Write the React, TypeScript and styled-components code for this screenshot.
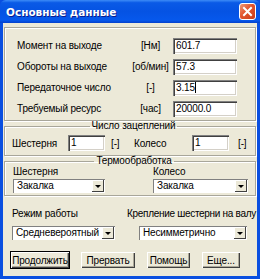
import React from "react";
import styled, { createGlobalStyle } from "styled-components";

const Global = createGlobalStyle`
  html, body { margin: 0; padding: 0; background: #ffffff; }
  * { box-sizing: border-box; }
`;

const Window = styled.div`
  width: 260px;
  height: 279px;
  overflow: hidden;
  display: flex;
  flex-direction: column;
  background: #0a4fe0;
  padding: 0 3px 3px 3px;
  font-family: "Liberation Sans", Arial, sans-serif;
  font-size: 10px;
  letter-spacing: -0.15px;
  color: #000;
`;

const TitleBar = styled.div`
  height: 23px;
  margin: 0 -3px;
  padding: 0 4px 0 6px;
  display: flex;
  align-items: center;
  justify-content: space-between;
  background: linear-gradient(to bottom, #3d8cf7 0%, #0a5ae6 12%, #0553e3 50%, #0658ec 88%, #0440cc 100%);
  border-radius: 6px 6px 0 0;
`;

const Title = styled.span`
  color: #fff;
  font-family: "DejaVu Sans", sans-serif;
  font-weight: bold;
  font-size: 10.5px;
  letter-spacing: 0;
  text-shadow: 1px 1px 0 #0a1c8c;
`;

const CloseBtn = styled.div`
  width: 17px;
  height: 17px;
  border: 1px solid #fff;
  border-radius: 3px;
  background: linear-gradient(135deg, #f09a78 0%, #e2542d 45%, #c83c1a 100%);
  display: flex;
  align-items: center;
  justify-content: center;
`;

const Client = styled.div`
  flex: 1;
  min-width: 0;
  background: #ece9d8;
  padding: 4px 1px 3px 1px;
  display: flex;
  flex-direction: column;
`;

const Panel = styled.div`
  height: 94px;
  border: 1px solid #a8a69a;
  box-shadow: inset 1px 1px 0 #fff, 1px 1px 0 #fff;
  padding: 7px 0 0 12px;
  display: grid;
  grid-template-columns: 111px 45px 64px;
  grid-auto-rows: 21px;
  align-items: center;
`;

const Label = styled.span<{ $w?: number; $tight?: boolean }>`
  white-space: nowrap;
  line-height: 11px;
  ${(p) => (p.$tight ? "letter-spacing: -0.3px;" : "")}
  ${(p) => (p.$w ? `width: ${p.$w}px; flex: none;` : "")}
`;

const Unit = styled.span<{ $pl?: number; $w?: number }>`
  white-space: nowrap;
  text-align: ${(p) => (p.$pl !== undefined ? "left" : "center")};
  padding-left: ${(p) => p.$pl ?? 0}px;
  ${(p) => (p.$w ? `width: ${p.$w}px; flex: none;` : "")}
`;

const Field = styled.div<{ $w?: number }>`
  height: 16px;
  width: ${(p) => (p.$w ? `${p.$w}px` : "100%")};
  flex: none;
  background: #fff;
  padding: 2px 0 0 3px;
  line-height: 12px;
  box-shadow: inset 1px 1px 0 #808080, inset 2px 2px 0 #404040, inset -1px -1px 0 #fff, inset -2px -2px 0 #d4d0c8;
`;

const Caret = styled.span`
  display: inline-block;
  width: 1px;
  height: 11px;
  background: #000;
  vertical-align: -2px;
`;

const Group = styled.fieldset<{ $pl: number; $pt: number; $pb: number }>`
  margin: 0;
  min-width: 0;
  border: 1px solid #a8a69a;
  box-shadow: inset 1px 1px 0 #fff, 1px 1px 0 #fff;
  padding: ${(p) => p.$pt}px 0 ${(p) => p.$pb}px ${(p) => p.$pl}px;
`;

const Legend = styled.legend`
  margin: 0 auto;
  padding: 0 2px;
  line-height: 10px;
  font-size: 10px;
`;

const Row = styled.div`
  display: flex;
  align-items: center;
  height: 18px;
`;

const Columns = styled.div<{ $gap: number }>`
  display: flex;
  gap: ${(p) => p.$gap}px;
`;

const Col = styled.div<{ $w: number }>`
  width: ${(p) => p.$w}px;
  display: flex;
  flex-direction: column;
  gap: 2px;
`;

const SelectBox = styled.div<{ $w: number; $ml?: number }>`
  width: ${(p) => p.$w}px;
  margin-left: ${(p) => p.$ml ?? 0}px;
  height: 14px;
  background: #fff;
  display: flex;
  align-items: stretch;
  padding: 1px;
  box-shadow: inset 1px 1px 0 #808080, inset -1px -1px 0 #fff;
`;

const SelectText = styled.span`
  flex: 1;
  padding-left: 3px;
  line-height: 12px;
  white-space: nowrap;
  overflow: hidden;
`;

const Arrow = styled.span`
  width: 12px;
  background: #ece9d8;
  box-shadow: inset -1px -1px 0 #404040, inset 1px 1px 0 #fff;
  display: flex;
  align-items: center;
  justify-content: center;
  &::after {
    content: "";
    border-left: 3px solid transparent;
    border-right: 3px solid transparent;
    border-top: 3px solid #000;
  }
`;

const Bottom = styled.div`
  margin-top: 12px;
  padding-left: 8px;
  display: flex;
  gap: 12px;
`;

const BottomCol = styled.div`
  display: flex;
  flex-direction: column;
  gap: 7px;
`;

const Buttons = styled.div`
  margin-top: 11px;
  padding-left: 6px;
  display: flex;
  gap: 10px;
`;

const Btn = styled.div<{ $w: number; $def?: boolean }>`
  width: ${(p) => p.$w}px;
  height: 18px;
  display: flex;
  align-items: center;
  justify-content: center;
  background: #ece9d8;
  border: 1px solid ${(p) => (p.$def ? "#000" : "#ece9d8")};
  box-shadow: inset 1px 1px 0 #fff, inset -1px -1px 0 #404040, inset -2px -2px 0 #aca899;
  white-space: nowrap;
`;

const Select = ({ w, ml, value }: { w: number; ml?: number; value: string }) => (
  <SelectBox $w={w} $ml={ml}>
    <SelectText>{value}</SelectText>
    <Arrow />
  </SelectBox>
);

const rows = [
  { label: "Момент на выходе", unit: "[Нм]", value: "601.7" },
  { label: "Обороты на выходе", unit: "[об/мин]", value: "57.3" },
  { label: "Передаточное число", unit: "[-]", value: "3.15", caret: true },
  { label: "Требуемый ресурс", unit: "[час]", value: "20000.0" },
];

export default function App() {
  return (
    <>
      <Global />
      <Window>
        <TitleBar>
          <Title>Основные данные</Title>
          <CloseBtn>
            <svg width="11" height="11" viewBox="0 0 11 11">
              <path d="M2 2 L9 9 M9 2 L2 9" stroke="#fff" strokeWidth="2" strokeLinecap="square" />
            </svg>
          </CloseBtn>
        </TitleBar>
        <Client>
          <Panel>
            {rows.map((r) => (
              <React.Fragment key={r.label}>
                <Label>{r.label}</Label>
                <Unit>{r.unit}</Unit>
                <Field>
                  {r.value}
                  {r.caret && <Caret />}
                </Field>
              </React.Fragment>
            ))}
          </Panel>
          <Group $pl={7} $pt={3} $pb={3}>
            <Legend>Число зацеплений</Legend>
            <Row>
              <Label $w={56}>Шестерня</Label>
              <Field $w={37}>1</Field>
              <Unit $pl={6} $w={29}>[-]</Unit>
              <Label $w={58}>Колесо</Label>
              <Field $w={37}>1</Field>
              <Unit $pl={9}>[-]</Unit>
            </Row>
          </Group>
          <Group $pl={8} $pt={0} $pb={2}>
            <Legend>Термообработка</Legend>
            <Columns $gap={48}>
              <Col $w={92}>
                <Label>Шестерня</Label>
                <Select w={92} value="Закалка" />
              </Col>
              <Col $w={95}>
                <Label>Колесо</Label>
                <Select w={95} value="Закалка" />
              </Col>
            </Columns>
          </Group>
          <Bottom>
            <BottomCol>
              <Label>Режим работы</Label>
              <Select w={103} value="Средневероятный" />
            </BottomCol>
            <BottomCol>
              <Label $tight>Крепление шестерни на валу</Label>
              <Select w={108} ml={12} value="Несимметрично" />
            </BottomCol>
          </Bottom>
          <Buttons>
            <Btn $w={60} $def>Продолжить</Btn>
            <Btn $w={56}>Прервать</Btn>
            <Btn $w={45}>Помощь</Btn>
            <Btn $w={40}>Еще...</Btn>
          </Buttons>
        </Client>
      </Window>
    </>
  );
}
